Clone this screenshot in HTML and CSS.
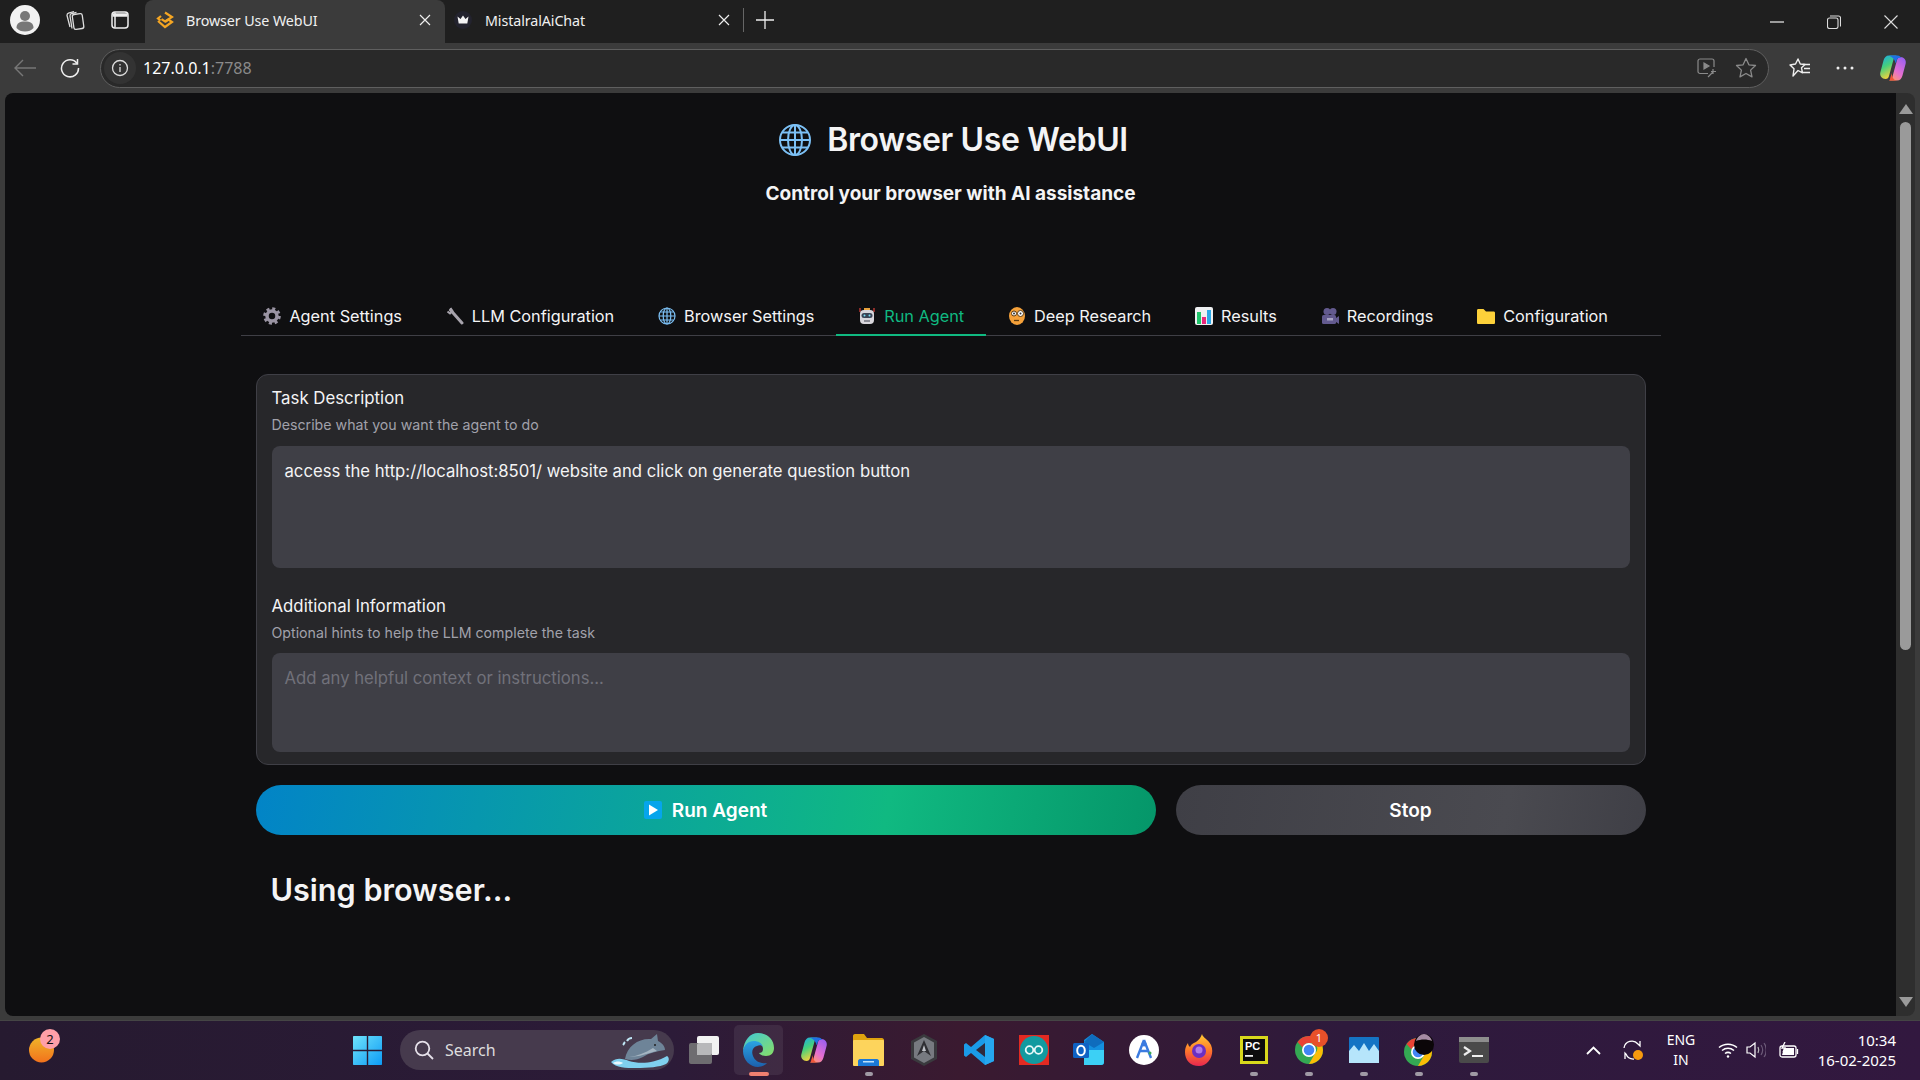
FILE: index.html
```html
<!DOCTYPE html>
<html>
<head>
  <meta charset="utf-8">
  <title>Browser Use WebUI</title>
  <link rel="stylesheet" href="styles.css">
</head>
<body>

  <!-- browser tab strip -->
  <div class="tabstrip">
    <div class="profile">
      <svg width="30" height="30" viewBox="0 0 30 30"><circle cx="15" cy="15" r="15" fill="#f2f2f2"/><circle cx="15" cy="11" r="5" fill="#777"/><path d="M6.500 23c0-5 3-6.500 8.500-6.500s8.500 1.500 8.500 6.500c-2 2.500-5 3.500-8.500 3.500s-6.500-1-8.500-3.500z" fill="#777"/></svg>
    </div>
    <div class="strip-btn">
      <svg width="22" height="22" viewBox="0 0 22 22" fill="none" stroke="#ddd" stroke-width="1.300"><rect x="9" y="5" width="10" height="15" rx="2" transform="rotate(-8 14 12)"/><path d="M6 18 3 6.500c0-1 .5-2 1.500-2.300L10 2.500M8 19.500 6 7c0-1 .5-2 1.500-2.300l5-1.200"/></svg>
    </div>
    <div class="strip-btn second">
      <svg width="20" height="20" viewBox="0 0 20 20" fill="none" stroke="#eee" stroke-width="1.500"><rect x="2" y="2" width="16" height="16" rx="3"/><path d="M5 2.500v15"/><path d="M2.500 5h15" stroke-width="3.500"/></svg>
    </div>
    <div class="tab active">
      <svg class="favicon" width="18" height="18" viewBox="0 0 18 18" fill="none" stroke="#f5a623" stroke-width="2.200"><path d="M9 1.500 16 6l-7 4.500L5.500 8.200"/><path d="M2 10l7 6 7-5-3.500-2.500L9 11"/><path d="M5 5 2 7.500 4.500 9.500"/></svg>
      <span class="tab-title">Browser Use WebUI</span>
      <span class="tab-x"><svg width="12" height="12" viewBox="0 0 12 12" stroke="#eee" stroke-width="1.200"><path d="M1 1l10 10M11 1 1 11"/></svg></span>
    </div>
    <div class="tab other">
      <svg class="favicon" width="18" height="18" viewBox="0 0 18 18"><circle cx="9" cy="9" r="9" fill="#23232e"/><path d="M3.500 5.500 6.500 8 9 4.500 11.500 8l3-2.500-1.200 7H4.700z" fill="#f4f4f4"/></svg>
      <span class="tab-title">MistalralAiChat</span>
      <span class="tab-x"><svg width="12" height="12" viewBox="0 0 12 12" stroke="#eee" stroke-width="1.200"><path d="M1 1l10 10M11 1 1 11"/></svg></span>
    </div>
    <div class="tab-div"></div>
    <div class="new-tab">
      <svg width="18" height="18" viewBox="0 0 18 18" stroke="#eee" stroke-width="1.300"><path d="M9 0v18M0 9h18"/></svg>
    </div>
    <div class="win-btns">
      <svg width="14" height="14" viewBox="0 0 14 14" stroke="#eee" stroke-width="1.200"><path d="M0 7h14"/></svg>
      <svg width="14" height="14" viewBox="0 0 14 14" fill="none" stroke="#ddd" stroke-width="1.100"><rect x=".5" y="3" width="10.500" height="10.500" rx="2"/><path d="M3 1h8.500c1 0 2 1 2 2v8.500"/></svg>
      <svg width="14" height="14" viewBox="0 0 14 14" stroke="#ddd" stroke-width="1.100"><path d="M.5.500l13 13M13.500.500l-13 13"/></svg>
    </div>
  </div>

  <!-- address bar -->
  <div class="toolbar">
    <svg class="back" width="22" height="18" viewBox="0 0 22 18" fill="none" stroke="#777" stroke-width="1.400"><path d="M22 9H1M9 1 1 9l8 8"/></svg>
    <svg class="reload" width="20" height="20" viewBox="0 0 20 20" fill="none" stroke="#eee" stroke-width="1.500"><path d="M17 5.500A8.500 8.500 0 1 0 18.500 10"/><path d="M17.500 1v5h-5"/></svg>
    <div class="address">
      <span class="info"><svg width="18" height="18" viewBox="0 0 18 18" fill="none" stroke="#ddd" stroke-width="1.300"><circle cx="9" cy="9" r="7.500"/><path d="M9 8v5M9 5v1.400"/></svg></span>
      <span class="url">127.0.0.1<span class="port">:7788</span></span>
      <svg class="read-aloud" width="20" height="20" viewBox="0 0 20 20" fill="none" stroke="#8a8a8a" stroke-width="1.200"><path d="M11 15.500H3c-1 0-2-1-2-2V3c0-1 1-2 2-2h12c1 0 2 1 2 2v6"/><path d="M7 5v6l5-3z" fill="#8a8a8a"/><path d="M11 19l5-5M16 11v5M14 13.500h5"/></svg>
      <svg class="star" width="22" height="22" viewBox="0 0 22 22" fill="none" stroke="#8a8a8a" stroke-width="1.300" stroke-linejoin="round"><path d="M11 1.500l2.900 6.300 6.600.7-4.900 4.600 1.400 6.800L11 16.500l-6 3.400 1.400-6.800L1.500 8.500l6.600-.7z"/></svg>
    </div>
    <svg class="favs" width="22" height="22" viewBox="0 0 22 22" fill="none" stroke="#eee" stroke-width="1.400" stroke-linejoin="round"><path d="M9 2l2.300 5 4.700.5-3.500 3.300 1 5L9 13.500 4 19l1-7.200L1 8l5.500-1z"/><path d="M14 7.500h7M15 11.500h6M14 15.500h7"/></svg>
    <svg class="dots" width="18" height="4" viewBox="0 0 18 4" fill="#eee"><circle cx="2" cy="2" r="1.500"/><circle cx="9" cy="2" r="1.500"/><circle cx="16" cy="2" r="1.500"/></svg>
    <svg class="copilot" width="28" height="28" viewBox="0 0 28 28">
      <defs>
        <linearGradient id="cpA" x1="0" y1="0" x2="0.400" y2="1"><stop offset="0" stop-color="#18a8ee"/><stop offset=".5" stop-color="#46d07c"/><stop offset="1" stop-color="#f5d23c"/></linearGradient>
        <linearGradient id="cpB" x1="0.800" y1="0" x2="0.200" y2="1"><stop offset="0" stop-color="#9a5ff0"/><stop offset=".6" stop-color="#e66fd0"/><stop offset="1" stop-color="#ff9a6a"/></linearGradient>
        <g id="copilotMark">
          <path d="M10 1.500h8c-2 .5-3 2-3.500 4L10 22c-.5 2-1.500 3-3.500 3C3 25 .5 22 1.300 18.500L4.500 6.500C5.300 3.500 7 1.500 10 1.500z" fill="url(#cpA)"/>
          <path d="M18 26.500h-8c2-.5 3-2 3.500-4L18 6c.5-2 1.500-3 3.500-3 3.500 0 6 3 5.200 6.500L23.500 21.500c-.8 3-2.500 5-5.500 5z" fill="url(#cpB)"/>
          <path d="M10 1.500h8.500c2 0 3 1 3.500 2.500-2-.8-3.500 0-4.200 2l-1 3.500C16 6 14 3 10 1.500z" fill="#1f6fe5"/>
          <path d="M10 26.500h8c-3 0-5.500-3.500-5-7.500l-1.500 4c-.5 2-.5 3-1.500 3.500z" fill="#f0563a"/>
        </g>
      </defs>
      <use href="#copilotMark"/>
    </svg>
  </div>

  <!-- page area -->
  <div class="viewport">
    <div class="page">
      <div class="content">
        <h1 class="title">
          <svg width="34" height="34" viewBox="0 0 34 34" fill="none" stroke="#7cc0f5" stroke-width="2"><circle cx="17" cy="17" r="15"/><ellipse cx="17" cy="17" rx="7" ry="15"/><path d="M17 2v30M2 17h30M4.500 9.500h25M4.500 24.500h25"/></svg>
          Browser Use WebUI
        </h1>
        <p class="subtitle">Control your browser with AI assistance</p>

        <div class="tabs">
          <div class="tabitem">
            <svg width="18" height="18" viewBox="0 0 18 18"><circle cx="9" cy="9" r="5" fill="none" stroke="#9a94a3" stroke-width="3.500"/><circle cx="9" cy="9" r="7.300" fill="none" stroke="#9a94a3" stroke-width="3" stroke-dasharray="3 2.730"/></svg>
            Agent Settings
          </div>
          <div class="tabitem">
            <svg width="18" height="18" viewBox="0 0 18 18" fill="none" stroke="#a8a4ad" stroke-width="3"><path d="M4.500 3 16 16" stroke-linecap="round"/><path d="M1.500 4.500 4 6.500 6.500 4 4.500 1" stroke-width="2"/></svg>
            LLM Configuration
          </div>
          <div class="tabitem">
            <svg width="18" height="18" viewBox="0 0 18 18" fill="none" stroke="#7cc0f5" stroke-width="1.200"><circle cx="9" cy="9" r="8"/><ellipse cx="9" cy="9" rx="3.800" ry="8"/><path d="M9 1v16M1 9h16M2.500 5h13M2.500 13h13"/></svg>
            Browser Settings
          </div>
          <div class="tabitem selected">
            <svg width="18" height="18" viewBox="0 0 18 18"><path d="M2 1v4M16 1v4" stroke="#e0413a" stroke-width="1.200"/><rect x="6" y="1" width="6" height="3" fill="#e8a33d"/><rect x="2" y="3" width="14" height="14" rx="4" fill="#d9d6dc"/><rect x="3.500" y="6" width="11" height="5" rx="2.500" fill="#3b4456"/><circle cx="6.500" cy="8.500" r="1" fill="#7ce0f5"/><circle cx="11.500" cy="8.500" r="1" fill="#7ce0f5"/><rect x="6" y="13" width="6" height="2" fill="#8a8a94"/></svg>
            Run Agent
          </div>
          <div class="tabitem">
            <svg width="18" height="18" viewBox="0 0 18 18"><ellipse cx="9" cy="9" rx="8" ry="9" fill="#f5a13a"/><circle cx="6" cy="6.500" r="2.500" fill="#fff" stroke="#5a3a10"/><circle cx="12.500" cy="6.500" r="3" fill="#fff" stroke="#5a3a10"/><circle cx="6" cy="6.500" r="1" fill="#333"/><circle cx="12.500" cy="6.500" r="1" fill="#333"/><path d="M6 13.500h5" stroke="#5a3a10" stroke-width="1.300"/></svg>
            Deep Research
          </div>
          <div class="tabitem">
            <svg width="18" height="18" viewBox="0 0 18 18"><rect width="18" height="18" rx="2" fill="#eef0f2"/><rect x="2" y="5" width="4" height="12" fill="#1fc46a"/><rect x="7" y="10" width="4" height="7" fill="#e8277a"/><rect x="12" y="3" width="4" height="14" fill="#2aa8e8"/></svg>
            Results
          </div>
          <div class="tabitem">
            <svg width="18" height="18" viewBox="0 0 18 18" fill="#635a8f"><circle cx="6" cy="4.500" r="3.500"/><circle cx="12" cy="4.500" r="3.500"/><rect x="1" y="8" width="14" height="9" rx="1.500"/><path d="M15 11l3-2v8l-3-2z"/><rect x="6" y="11" width="6" height="2.500" fill="#a8a3c4"/></svg>
            Recordings
          </div>
          <div class="tabitem">
            <svg width="18" height="18" viewBox="0 0 18 18"><path d="M0 3.500C0 2.500.5 2 1.500 2h5L9 4.500h7.500c1 0 1.500.5 1.500 1.500v9.500c0 1-.5 1.500-1.500 1.500h-15C.5 17 0 16.500 0 15.500z" fill="#fdd13a"/></svg>
            Configuration
          </div>
        </div>

        <div class="card">
          <label class="field-label">Task Description</label>
          <div class="field-hint">Describe what you want the agent to do</div>
          <textarea class="field-input task-input">access the http://localhost:8501/ website and click on generate question button</textarea>
          <label class="field-label second">Additional Information</label>
          <div class="field-hint">Optional hints to help the LLM complete the task</div>
          <textarea class="field-input info-input" placeholder="Add any helpful context or instructions..."></textarea>
        </div>

        <div class="actions">
          <button class="btn btn-run" type="button">
            <svg width="18" height="18" viewBox="0 0 18 18"><rect width="18" height="18" rx="2" fill="#06a5ec"/><path d="M5 3.500v11L14 9z" fill="#fff"/></svg>
            Run Agent
          </button>
          <button class="btn btn-stop" type="button">Stop</button>
        </div>

        <h2 class="status">Using browser...</h2>
      </div>
    </div>
    <div class="scrollbar">
      <svg width="14" height="10" viewBox="0 0 14 10" fill="#9a9a9a"><path d="M7 0l7 10H0z"/></svg>
      <div class="thumb"></div>
      <svg class="down" width="14" height="10" viewBox="0 0 14 10" fill="#9a9a9a"><path d="M7 10 14 0H0z"/></svg>
    </div>
  </div>

  <!-- windows taskbar -->
  <div class="taskbar">
    <div class="widget">
      <svg width="32" height="36" viewBox="0 0 32 36">
        <defs><linearGradient id="wgA" x1="0" y1="0" x2="0" y2="1"><stop offset="0" stop-color="#f0b429"/><stop offset="1" stop-color="#f2721c"/></linearGradient></defs>
        <circle cx="12.500" cy="18" r="12.500" fill="url(#wgA)"/>
      </svg>
      <span class="widget-badge">2</span>
    </div>

    <svg class="start" width="29" height="29" viewBox="0 0 29 29">
      <defs><linearGradient id="stA" x1="0" y1="0" x2="1" y2="1"><stop offset="0" stop-color="#6fe3fb"/><stop offset="1" stop-color="#0d9bf5"/></linearGradient></defs>
      <path d="M0 1c0-.6.400-1 1-1h12.800v13.800H0zM15.200 0H28c.6 0 1 .4 1 1v12.800H15.200zM0 15.200h13.800V29H1c-.6 0-1-.4-1-1zM15.200 15.200H29V28c0 .6-.4 1-1 1H15.200z" fill="url(#stA)"/>
    </svg>

    <div class="search">
      <svg width="20" height="20" viewBox="0 0 20 20" fill="none" stroke="#e6e1ea" stroke-width="1.800"><circle cx="8.500" cy="8.500" r="6.800"/><path d="M13.500 13.500 19 19"/></svg>
      <span class="search-text">Search</span>
      <svg class="whale" width="62" height="36" viewBox="0 0 62 36"><path d="M2 30c6-5 12-3 18-1 10 3 24 3 38-5 3 2 2 6-1 8-6 3-18 4-30 4-10 0-20 0-25-6z" fill="#7fd0ee"/><path d="M4 31c3-2 7-2 10 0-3 2-7 2-10 0z" fill="#eaf8fd"/><path d="M16 27C18 14 30 6 42 7l6-5 1 7c4 2 7 5 7 9-8 1-16 3-22 7-6 3-12 4-18 2z" fill="#6e8498"/><path d="M20 25c8-1 16-4 24-9l4 3c-8 2-18 6-28 6z" fill="#a5b5c2"/><circle cx="46" cy="13" r="1" fill="#222"/><path d="M18 9c1-2 3-3 5-3M14 13c1-1 1-2 2-3" stroke="#bfe6f5" stroke-width="2" fill="none"/></svg>
    </div>

    <div class="pinned">
      <div class="pin">
        <svg width="30" height="28" viewBox="0 0 30 28"><rect x="8" y="0" width="22" height="19" rx="2" fill="#f2f2f2"/><rect x="0" y="7" width="23" height="21" rx="2" fill="#6e6c70"/><path d="M8 9c0-1 .5-2 2-2h13v10c0 1-.5 2-2 2H8z" fill="#b8b8ba"/></svg>
      </div>
      <div class="pin active-pin">
        <svg width="31" height="34" viewBox="0 0 31 34">
          <defs>
            <linearGradient id="edA" x1="0" y1="0" x2="1" y2="1"><stop offset="0" stop-color="#32c5d6"/><stop offset="1" stop-color="#7fdc5a"/></linearGradient>
            <linearGradient id="edB" x1="0" y1="0" x2="0" y2="1"><stop offset="0" stop-color="#1b9de2"/><stop offset="1" stop-color="#0b55a8"/></linearGradient>
          </defs>
          <path d="M15 0c9 0 16 6 16 15 0 5-3 8-8 8-3 0-6-1-7-3 2 0 4-1 4-4 0-4-4-7-9-6-5 0-9 3-11 8C1 7 7 0 15 0z" fill="url(#edA)"/>
          <path d="M0 18c1-6 5-10 11-10 4 0 8 2 9 6-1-2-4-2-6-1-4 1-6 5-4 10 2 5 7 8 14 7-3 3-6 4-9 4C7 34 0 27 0 18z" fill="url(#edB)"/>
        </svg>
      </div>
      <div class="pin">
        <svg width="28" height="28" viewBox="0 0 28 28"><use href="#copilotMark"/></svg>
      </div>
      <div class="pin running">
        <svg width="31" height="32" viewBox="0 0 31 32"><path d="M0 2c0-1 .5-2 2-2h9l3 4h15c1 0 2 1 2 2v4H0z" fill="#dfa30e"/><rect y="6" width="31" height="26" rx="1" fill="#fdd45c"/><path d="M5 32v-5c0-1 1-2 2-2h17c1 0 2 1 2 2v5z" fill="#1a78d8"/><rect x="10" y="27" width="11" height="1.500" fill="#bde0fb"/></svg>
      </div>
      <div class="pin">
        <svg width="26" height="32" viewBox="0 0 26 32"><path d="M13 0l13 7v18l-13 7L0 25V7z" fill="#3a3a3e"/><path d="M13 3l10 5.500v15L13 29 3 23.500v-15z" fill="#777a80"/><path d="M13 6 6 22l7-5 7 5z" fill="#2f2f33"/><path d="M13 11l-2 6h4z" fill="#bfc2c8"/></svg>
      </div>
      <div class="pin">
        <svg width="30" height="30" viewBox="0 0 30 30"><path d="M21 0l9 4v22l-9 4-14-12-5 4-2-1.500v-11L2 8l5 4z" fill="#1a9be8"/><path d="M21 8 12 15l9 7z" fill="#2f2a3c"/><path d="M21 0l9 4v22l-9 4z" fill="#26a7ef"/></svg>
      </div>
      <div class="pin">
        <svg width="30" height="30" viewBox="0 0 30 30" fill="none"><rect width="30" height="30" fill="#e32a22"/><circle cx="15" cy="15" r="14" fill="#129aa0"/><circle cx="10.500" cy="15" r="3.800" stroke="#e8f8f8" stroke-width="1.800"/><circle cx="19.500" cy="15" r="3.800" stroke="#e8f8f8" stroke-width="1.800"/></svg>
      </div>
      <div class="pin">
        <svg width="31" height="32" viewBox="0 0 31 32"><path d="M19 0l12 8v20c0 2-1 3-3 3H11V6z" fill="#1490df"/><path d="M11 16h20v12c0 2-1 3-3 3H11z" fill="#3cd0f5"/><path d="M19 0l12 8-10 6-10-6z" fill="#0f6cbd"/><rect y="9" width="16" height="15" rx="1.500" fill="#0f62c4"/><ellipse cx="8" cy="16.500" rx="3.800" ry="4.800" fill="none" stroke="#fff" stroke-width="2"/></svg>
      </div>
      <div class="pin">
        <svg width="30" height="30" viewBox="0 0 30 30"><circle cx="15" cy="15" r="15" fill="#fff"/><path d="M15 5 8 23M15 5l7 18M10 16h10" stroke="#3b7be0" stroke-width="2.400" fill="none"/><circle cx="15" cy="9" r="2.500" fill="#3b7be0"/><circle cx="21" cy="18" r="1.500" fill="#3caa55"/></svg>
      </div>
      <div class="pin">
        <svg width="28" height="32" viewBox="0 0 28 32">
          <defs><linearGradient id="ffA" x1="0" y1="0" x2="0" y2="1"><stop offset="0" stop-color="#ffcc33"/><stop offset=".5" stop-color="#ff7a2a"/><stop offset="1" stop-color="#e8274f"/></linearGradient></defs>
          <path d="M17 0c1 4 6 5 9 11 4 9-2 21-12 21C5 32 0 26 0 18c0-4 1-6 3-9 0 2 1 3 2 4 1-3 4-4 6-5 3-2 5-5 6-8z" fill="url(#ffA)"/>
          <circle cx="14" cy="17" r="7" fill="#6b2fc2"/><circle cx="14" cy="16" r="3.500" fill="#b07ae8"/>
        </svg>
      </div>
      <div class="pin running">
        <svg width="28" height="28" viewBox="0 0 28 28"><rect width="28" height="28" fill="#d8d81c"/><rect x="3" y="3" width="22" height="22" fill="#0c0c0c"/><text class="pc-text" x="5" y="14">PC</text><rect x="5" y="19" width="8" height="1.800" fill="#eee"/></svg>
      </div>
      <div class="pin running">
        <svg width="28" height="28" viewBox="0 0 28 28"><circle cx="14" cy="14" r="14" fill="#34a853"/><path d="M14 0a14 14 0 0 1 12.100 7H14a7 7 0 0 0-6.500 4.500L2.500 6A14 14 0 0 1 14 0z" fill="#ea4335"/><path d="M26.100 7A14 14 0 0 1 14 28l6-10.500a7 7 0 0 0 0-10.500z" fill="#fbbc05"/><circle cx="14" cy="14" r="7" fill="#fff"/><circle cx="14" cy="14" r="5.300" fill="#4285f4"/></svg>
        <span class="pin-badge">1</span>
      </div>
      <div class="pin running">
        <svg width="30" height="26" viewBox="0 0 30 26"><rect width="30" height="26" rx="1" fill="#1574c4"/><path d="M0 26V14l5-6 5 6 5-8 5 8 5-7 5 7v12z" fill="#b6e5fb"/></svg>
      </div>
      <div class="pin running">
        <svg width="30" height="32" viewBox="0 0 30 32"><circle cx="14" cy="18" r="14" fill="#34a853"/><path d="M14 4a14 14 0 0 1 12.100 7H14a7 7 0 0 0-6.500 4.500L2.500 10A14 14 0 0 1 14 4z" fill="#ea4335"/><path d="M26.100 11A14 14 0 0 1 14 32l6-10.500a7 7 0 0 0 0-10.500z" fill="#fbbc05"/><circle cx="14" cy="18" r="7" fill="#fff"/><circle cx="14" cy="18" r="5.300" fill="#4285f4"/><ellipse cx="20" cy="10.500" rx="10" ry="10.500" fill="#0b0608"/><path d="M12 7c1-4 5-7 8-7s7 3 8 7c-5-2-11-2-16 0z" fill="#a58ba3"/></svg>
      </div>
      <div class="pin running">
        <svg width="30" height="26" viewBox="0 0 30 26"><rect width="30" height="26" rx="2" fill="#4a4a4a"/><rect width="30" height="5" fill="#8e8e8e"/><path d="M5 10l6 4-6 4" fill="none" stroke="#eee" stroke-width="2.200"/><rect x="13" y="18" width="11" height="2" fill="#eee"/></svg>
      </div>
    </div>

    <div class="tray">
      <svg class="chev" width="15" height="9" viewBox="0 0 15 9" fill="none" stroke="#fff" stroke-width="1.800"><path d="M1 8l6.500-6.500L14 8"/></svg>
      <svg class="sync" width="22" height="22" viewBox="0 0 22 22" fill="none" stroke="#fff" stroke-width="1.300"><path d="M2 9a8 8 0 0 1 14-4l2 2V2M12 20a8 8 0 0 1-8-5l-1-1v6"/><circle cx="16" cy="16" r="5" fill="#f79a0e" stroke="none"/></svg>
      <div class="lang"><span>ENG</span><span>IN</span></div>
      <svg class="wifi" width="20" height="16" viewBox="0 0 20 16" fill="none" stroke="#fff" stroke-width="1.500"><path d="M1 5.500c5-4.500 13-4.500 18 0M4 8.500c3.500-3 8.500-3 12 0M7 11.500c2-1.500 4-1.500 6 0"/><circle cx="10" cy="14.500" r="1.200" fill="#fff" stroke="none"/></svg>
      <svg class="vol" width="20" height="18" viewBox="0 0 20 18" fill="none" stroke="#fff" stroke-width="1.200"><path d="M1 6v6h3l5 4V2L4 6z"/><path d="M12 6c1 2 1 4 0 6" stroke="#bbb"/><path d="M15 4c2 3 2 7 0 10M18 2c3 4 3 10 0 14" stroke="#6c5a78"/></svg>
      <svg class="batt" width="20" height="16" viewBox="0 0 20 16" fill="none" stroke="#fff" stroke-width="1.300"><rect x="1" y="4" width="16" height="11" rx="2"/><path d="M18.500 7v5"/><path d="M3 13l2-7h10v7z" fill="#fff" stroke="none"/><path d="M6 0 3 6h3L4 10" stroke="#fff"/></svg>
      <div class="clock"><span>10:34</span><span>16-02-2025</span></div>
    </div>
  </div>

</body>
</html>
```

FILE: styles.css
```css
* {
  box-sizing: border-box;
}
html, body {
  margin: 0;
  height: 100%;
  overflow: hidden;
}
body {
  display: flex;
  flex-direction: column;
  width: 1920px;
  height: 1080px;
  background-color: #3b3b3b;
  font-family: "Noto Sans", sans-serif;
  color: #fff;
}

/* tab strip */
.tabstrip {
  display: flex;
  align-items: center;
  height: 43px;
  flex: none;
  padding-left: 10px;
  background-color: #1f1f1f;
}
.profile {
  display: flex;
  width: 30px;
  height: 30px;
  margin-right: 24px;
  margin-bottom: 3px;
}
.strip-btn {
  display: flex;
  justify-content: center;
  width: 22px;
  margin-right: 23px;
  margin-bottom: 3px;
}
.strip-btn.second {
  margin-right: 14px;
}
.tab {
  display: flex;
  align-items: center;
  align-self: stretch;
  width: 300px;
  padding: 0 14px 3px 11px;
  font-size: 14.300px;
  letter-spacing: -.1px;
  color: #f0f0f0;
}
.tab.active {
  background-color: #3b3b3b;
  border-radius: 8px 8px 0 0;
}
.tab.active .favicon {
  margin-right: 12px;
}
.tab.other {
  width: 295px;
  padding-left: 9px;
  padding-right: 10px;
}
.favicon {
  flex: none;
  margin-right: 13px;
}
.tab-title {
  flex: 1;
}
.tab-x {
  display: flex;
}
.tab-div {
  width: 1px;
  height: 24px;
  margin-left: 3px;
  margin-bottom: 3px;
  background-color: #666;
}
.new-tab {
  display: flex;
  margin-left: 12px;
  margin-bottom: 3px;
}
.win-btns {
  display: flex;
  align-items: center;
  gap: 43px;
  margin-left: auto;
  padding-right: 22px;
}

/* toolbar */
.toolbar {
  display: flex;
  align-items: center;
  height: 50px;
  flex: none;
  padding-left: 14px;
  background-color: #3b3b3b;
}
.reload {
  margin-left: 24px;
}
.address {
  display: flex;
  align-items: center;
  width: 1669px;
  height: 39px;
  margin-left: 20px;
  padding-left: 3px;
  padding-right: 11px;
  background-color: #292929;
  border: 1px solid #5f5f5f;
  border-radius: 20px;
}
.info {
  display: flex;
  align-items: center;
  justify-content: center;
  width: 32px;
  height: 32px;
  background-color: #333;
  border-radius: 50%;
}
.url {
  margin-left: 7px;
  font-size: 16px;
}
.port {
  color: #8a8a8a;
}
.read-aloud {
  margin-left: auto;
}
.star {
  margin-left: 18px;
}
.favs {
  margin-left: 20px;
}
.dots {
  margin-left: 25px;
}
.copilot {
  margin-left: 25px;
}

/* page */
.viewport {
  display: flex;
  height: 923px;
  flex: none;
  padding-left: 5px;
  padding-right: 5px;
}
.page {
  width: 1891px;
  background-color: #0f0f11;
  border-radius: 8px 0 0 8px;
  font-family: Inter, sans-serif;
  color: #f4f4f5;
}
.content {
  width: 1420px;
  margin: 0 auto;
  padding-top: 27px;
}
.title {
  display: flex;
  align-items: center;
  justify-content: center;
  gap: 15px;
  height: 40px;
  margin: 0;
  padding-left: 5px;
  font-size: 32px;
  font-weight: 600;
  letter-spacing: -.35px;
  line-height: 40px;
}
.subtitle {
  height: 24px;
  margin: 22px 0 0;
  text-align: center;
  font-size: 19px;
  font-weight: 700;
  line-height: 24px;
}
.tabs {
  display: flex;
  height: 40px;
  margin-top: 90px;
  padding-left: 1px;
  border-bottom: 1px solid #3f3f46;
}
.tabitem {
  display: flex;
  align-items: center;
  gap: 8px;
  height: 40px;
  padding: 0 21.900px;
  font-size: 16.300px;
  white-space: nowrap;
}
.tabitem.selected {
  color: #10b981;
  border-top: 2px solid transparent;
  border-bottom: 2px solid #10b981;
}
.card {
  margin: 38px 15px 0;
  padding: 11px 15px 12px;
  background-color: #27272a;
  border: 1px solid #3f3f46;
  border-radius: 12px;
}
.field-label {
  display: block;
  font-size: 16.800px;
  line-height: 24px;
}
.field-label.second {
  margin-top: 26px;
}
.field-hint {
  margin-top: 7px;
  font-size: 14.200px;
  line-height: 16px;
  color: #a1a1aa;
}
.field-input {
  display: block;
  width: 100%;
  margin-top: 13px;
  padding: 13px 13px 11px;
  background-color: #3f3f46;
  border: 0;
  border-radius: 8px;
  resize: none;
  outline: none;
  font-family: Inter, sans-serif;
  font-size: 16.700px;
  line-height: 24px;
  color: #f4f4f5;
}
.field-input::placeholder {
  color: #71717a;
}
.task-input {
  height: 122px;
}
.info-input {
  height: 99px;
  margin-top: 12px;
}
.actions {
  display: grid;
  grid-template-columns: 900fr 470fr;
  gap: 20px;
  margin: 20px 15px 0;
}
.btn {
  display: flex;
  align-items: center;
  justify-content: center;
  gap: 10px;
  height: 50px;
  border: 0;
  border-radius: 25px;
  font-family: Inter, sans-serif;
  font-size: 19px;
  font-weight: 600;
  color: #fff;
}
.btn-run {
  background: linear-gradient(100deg, #0284c7 0%, #10b981 70%, #059669 100%);
}
.btn-stop {
  background: linear-gradient(100deg, #3f3f46 0%, #4a4a50 70%, #3f3f46 100%);
}
.status {
  margin: 35px 0 0 30px;
  font-size: 30.600px;
  font-weight: 600;
  line-height: 40px;
}

/* scrollbar */
.scrollbar {
  display: flex;
  flex-direction: column;
  align-items: center;
  width: 19px;
  padding-top: 11px;
  padding-bottom: 9px;
  background-color: #2e2e2e;
  border-radius: 0 8px 8px 0;
}
.thumb {
  width: 11px;
  height: 528px;
  margin-top: 8px;
  background-color: #9a9a9a;
  border-radius: 6px;
}
.scrollbar .down {
  margin-top: auto;
}

/* taskbar */
.taskbar {
  display: flex;
  align-items: center;
  height: 60px;
  margin-top: 4px;
  padding-bottom: 1px;
  flex: none;
  background: linear-gradient(90deg, #261a30 0%, #2c1b38 35%, #3a1a30 50%, #2e1a3c 70%, #32183f 100%);
  border-top: 1px solid #454545;
}
.widget {
  position: relative;
  width: 32px;
  height: 36px;
  margin-left: 29px;
}
.widget-badge {
  position: absolute;
  top: -3px;
  left: 11px;
  width: 20px;
  height: 20px;
  background-color: #ff9fa8;
  border-radius: 50%;
  text-align: center;
  font-size: 13px;
  line-height: 20px;
  color: #111;
}
.start {
  margin-left: 292px;
}
.search {
  display: flex;
  align-items: center;
  width: 274px;
  height: 40px;
  margin-left: 18px;
  padding-left: 14px;
  padding-right: 3px;
  background-color: #463a4d;
  border-radius: 20px;
}
.search-text {
  margin-left: 11px;
  font-size: 16px;
  color: #ddd;
}
.whale {
  margin-left: auto;
}
.pinned {
  display: flex;
  margin-left: 2px;
}
.pin {
  position: relative;
  display: flex;
  align-items: center;
  justify-content: center;
  width: 55px;
  height: 59px;
}
.pin.running::after, .active-pin::after {
  content: "";
  position: absolute;
  bottom: 4px;
  left: 24px;
  width: 8px;
  height: 4px;
  background-color: #a09aa5;
  border-radius: 2px;
}
.active-pin::before {
  content: "";
  position: absolute;
  top: 4px;
  left: 3px;
  width: 49px;
  height: 50px;
  background-color: rgba(255, 255, 255, .07);
  border-radius: 5px;
}
.active-pin::after {
  left: 18px;
  width: 20px;
  background-color: #f08070;
}
.pin-badge {
  position: absolute;
  top: 8px;
  left: 29px;
  width: 18px;
  height: 18px;
  background-color: #e8502a;
  border-radius: 50%;
  text-align: center;
  font-size: 11px;
  line-height: 18px;
}
.pc-text {
  font-family: "Liberation Sans", sans-serif;
  font-size: 11px;
  font-weight: 700;
  fill: #fff;
}
.tray {
  display: flex;
  align-items: center;
  flex: 1;
  padding-right: 24px;
}
.chev {
  margin-left: 85px;
}
.sync {
  margin-left: 21px;
}
.lang {
  display: flex;
  flex-direction: column;
  align-items: center;
  width: 40px;
  margin-left: 17px;
  font-size: 14px;
  line-height: 20px;
}
.wifi {
  margin-left: 17px;
}
.vol {
  margin-left: 8px;
}
.batt {
  margin-left: 13px;
}
.clock {
  display: flex;
  flex-direction: column;
  align-items: flex-end;
  margin-left: auto;
  font-size: 15px;
  line-height: 20px;
}
```
